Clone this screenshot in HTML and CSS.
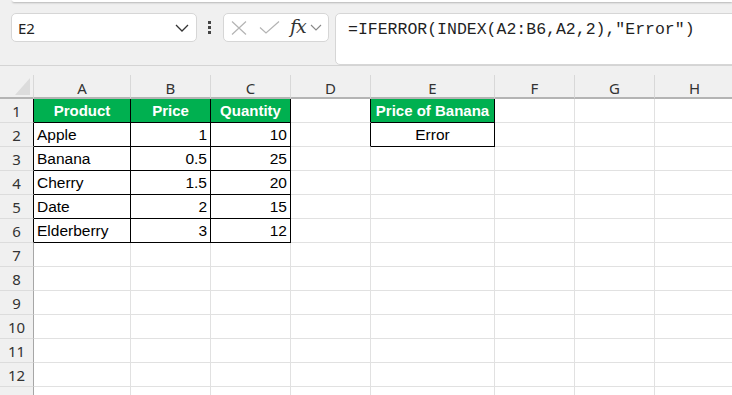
FILE: index.html
```html
<!DOCTYPE html>
<html>
<head>
    <title>IFERROR INDEX</title>
    <link rel="stylesheet" href="styles.css">
</head>
<body>
    <div class="topbar">
        <div class="ribbon-edge"></div>
        <div class="bar-row">
            <div class="name-box">
                <span>E2</span>
                <svg class="chevron" width="14" height="8" viewBox="0 0 14 8"><path d="M1 1 L7 7 L13 1" fill="none" stroke="#333" stroke-width="1.3"/></svg>
            </div>
            <div class="dots"><i></i><i></i><i></i></div>
            <div class="fx-box">
                <svg class="icon-x" width="16" height="14" viewBox="0 0 16 14"><path d="M1 0.5 L15 13.5 M15 0.5 L1 13.5" stroke="#b4b4b4" stroke-width="1.2" fill="none"/></svg>
                <svg class="icon-check" width="21" height="13" viewBox="0 0 21 13"><path d="M1 6.5 L7 12 L20 0.5" stroke="#b4b4b4" stroke-width="1.2" fill="none"/></svg>
                <span class="fx-label">fx</span>
                <svg class="icon-more" width="12" height="7" viewBox="0 0 12 7"><path d="M1 1 L6 6 L11 1" fill="none" stroke="#888" stroke-width="1.1"/></svg>
            </div>
            <div class="formula-box">=IFERROR(INDEX(A2:B6,A2,2),"Error")</div>
        </div>
    </div>

    <div class="sheet">
        <table class="grid">
            <colgroup>
                <col class="w-rownum">
                <col class="w-a">
                <col class="w-std">
                <col class="w-std">
                <col class="w-std">
                <col class="w-e">
                <col class="w-std">
                <col class="w-std">
                <col class="w-std">
            </colgroup>
            <thead>
                <tr>
                    <th class="corner"><svg width="33" height="22" viewBox="0 0 33 22"><polygon points="30,3 30,20 15,20" fill="#dcdcdc"/></svg></th>
                    <th>A</th><th>B</th><th>C</th><th>D</th><th>E</th><th>F</th><th>G</th><th>H</th>
                </tr>
            </thead>
            <tbody>
                <tr>
                    <th class="rownum edge">1</th>
                    <td class="b head">Product</td>
                    <td class="b head">Price</td>
                    <td class="b head">Quantity</td>
                    <td class="edge"></td>
                    <td class="b head">Price of Banana</td>
                    <td></td><td></td><td></td>
                </tr>
                <tr>
                    <th class="rownum edge">2</th>
                    <td class="b">Apple</td>
                    <td class="b num">1</td>
                    <td class="b num">10</td>
                    <td class="edge"></td>
                    <td class="b center">Error</td>
                    <td></td><td></td><td></td>
                </tr>
                <tr>
                    <th class="rownum edge">3</th>
                    <td class="b">Banana</td>
                    <td class="b num">0.5</td>
                    <td class="b num">25</td>
                    <td></td><td></td><td></td><td></td><td></td>
                </tr>
                <tr>
                    <th class="rownum edge">4</th>
                    <td class="b">Cherry</td>
                    <td class="b num">1.5</td>
                    <td class="b num">20</td>
                    <td></td><td></td><td></td><td></td><td></td>
                </tr>
                <tr>
                    <th class="rownum edge">5</th>
                    <td class="b">Date</td>
                    <td class="b num">2</td>
                    <td class="b num">15</td>
                    <td></td><td></td><td></td><td></td><td></td>
                </tr>
                <tr>
                    <th class="rownum edge">6</th>
                    <td class="b">Elderberry</td>
                    <td class="b num">3</td>
                    <td class="b num">12</td>
                    <td></td><td></td><td></td><td></td><td></td>
                </tr>
                <tr><th class="rownum">7</th><td></td><td></td><td></td><td></td><td></td><td></td><td></td><td></td></tr>
                <tr><th class="rownum">8</th><td></td><td></td><td></td><td></td><td></td><td></td><td></td><td></td></tr>
                <tr><th class="rownum">9</th><td></td><td></td><td></td><td></td><td></td><td></td><td></td><td></td></tr>
                <tr><th class="rownum">10</th><td></td><td></td><td></td><td></td><td></td><td></td><td></td><td></td></tr>
                <tr><th class="rownum">11</th><td></td><td></td><td></td><td></td><td></td><td></td><td></td><td></td></tr>
                <tr><th class="rownum">12</th><td></td><td></td><td></td><td></td><td></td><td></td><td></td><td></td></tr>
                <tr><th class="rownum">13</th><td></td><td></td><td></td><td></td><td></td><td></td><td></td><td></td></tr>
            </tbody>
        </table>
    </div>
</body>
</html>
```

FILE: styles.css
```css
body {
    margin: 0;
    width: 732px;
    height: 395px;
    overflow: hidden;
    background-color: #f0f0f0;
    font-family: "Liberation Sans", Arial, sans-serif;
}

/* formula bar area */
.topbar {
    height: 65px;
}

.ribbon-edge {
    height: 2px;
    margin-left: 12px;
    background-color: #ffffff;
    border-bottom-left-radius: 4px;
    box-shadow: 0 1px 2px rgba(0, 0, 0, 0.25);
}

.bar-row {
    display: flex;
    align-items: flex-start;
    margin-top: 11px;
    padding-left: 11px;
}

.bar-row > * {
    flex-shrink: 0;
}

.name-box {
    width: 186px;
    height: 29px;
    box-sizing: border-box;
    display: flex;
    align-items: center;
    justify-content: space-between;
    padding: 0 7px 0 6px;
    background-color: #ffffff;
    border: 1px solid #d6d6d6;
    border-radius: 5px;
    font-family: "Noto Sans", "Open Sans", sans-serif;
    font-size: 15px;
    color: #222;
}

.dots {
    display: flex;
    flex-direction: column;
    gap: 2px;
    width: 3px;
    margin: 8px 12px 0 11px;
}

.dots i {
    display: block;
    width: 3px;
    height: 3px;
    background-color: #444;
}

.fx-box {
    width: 106px;
    height: 29px;
    box-sizing: border-box;
    display: flex;
    align-items: center;
    background-color: #ffffff;
    border: 1px solid #d6d6d6;
    border-radius: 5px;
}

.icon-x {
    margin-left: 7px;
}

.icon-check {
    margin-left: 12px;
}

.fx-label {
    margin-left: 10px;
    margin-top: -3px;
    font-family: "DejaVu Serif", "Liberation Serif", serif;
    font-style: italic;
    font-size: 19px;
    line-height: 20px;
    letter-spacing: -1px;
    color: #333;
}

.icon-more {
    margin-left: 4px;
}

.formula-box {
    width: 420px;
    height: 52px;
    box-sizing: border-box;
    margin-left: 6px;
    padding: 6px 12px;
    background-color: #ffffff;
    border: 1px solid #d6d6d6;
    border-radius: 5px;
    font-family: "Liberation Mono", monospace;
    font-size: 16.5px;
    line-height: 19px;
    color: #1f1f1f;
    white-space: nowrap;
}

/* worksheet */
.sheet {
    border-top: 1px solid #d4d4d4;
    padding-top: 9px;
}

.grid {
    table-layout: fixed;
    width: 734px;
    border-collapse: separate;
    border-spacing: 0;
    background-color: #ffffff;
}

.w-rownum { width: 34px; }
.w-a { width: 97px; }
.w-std { width: 80px; }
.w-e { width: 124px; }

.grid tr {
    height: 24px;
}

.grid thead th {
    padding: 3px 0 0 0;
    background-color: #f0f0f0;
    border-right: 1px solid #d8d8d8;
    border-bottom: 2px solid #b4b4b4;
    font-family: "Noto Sans", "Open Sans", sans-serif;
    font-weight: normal;
    font-size: 15px;
    line-height: 18px;
    color: #333;
}

.grid thead th.corner {
    padding: 0;
    border-right: 1px solid #d8d8d8;
}

.corner svg {
    display: block;
}

.rownum {
    padding: 0;
    background-color: #f0f0f0;
    border-right: 1px solid #a6a6a6;
    border-bottom: 1px solid #dcdcdc;
    font-family: "Noto Sans", "Open Sans", sans-serif;
    font-weight: normal;
    font-size: 15px;
    line-height: 18px;
    color: #333;
    text-align: center;
}

.grid td {
    padding: 0 3px;
    border-right: 1px solid #e1e1e1;
    border-bottom: 1px solid #e1e1e1;
    font-size: 15.5px;
    line-height: 18px;
    color: #000;
    white-space: nowrap;
    overflow: hidden;
}

.grid td.b {
    border-right-color: #000000;
    border-bottom-color: #000000;
}

.grid .edge {
    border-right-color: #000000;
}

.grid td.head {
    background-color: #00b050;
    color: #ffffff;
    font-weight: bold;
    font-size: 15px;
    text-align: center;
}

.grid td.num {
    text-align: right;
}

.grid td.center {
    text-align: center;
}
```
